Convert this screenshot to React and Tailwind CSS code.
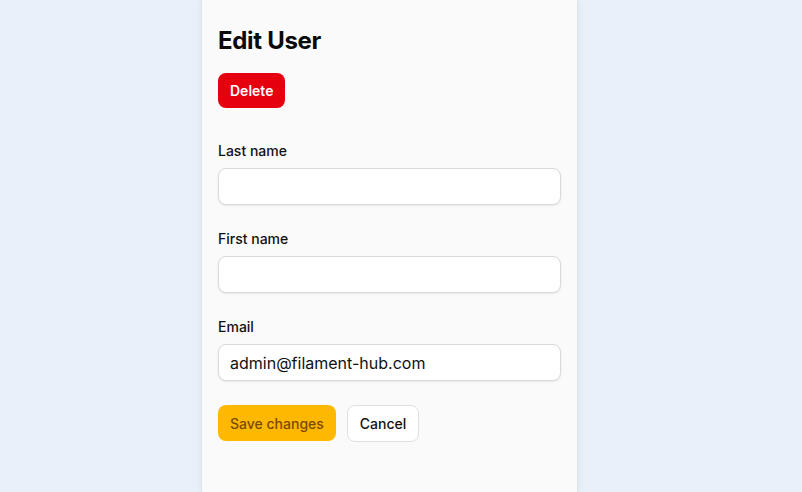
export default function App() {
  const field = (label, value) => (
    <div className="flex flex-col">
      <label className="mt-[1px] text-[14px] leading-5 font-medium text-[#111]">{label}</label>
      <div className="mt-[7px] h-[37px] w-full rounded-[8px] border border-[#d9d9d9] bg-white shadow-[0_1px_2px_rgba(0,0,0,0.08)] flex items-center pl-[11px] pr-3 text-[16px] text-[#111]">
        {value}
      </div>
    </div>
  );
  return (
    <div className="w-[802px] h-[492px] bg-[#e8f0f9] flex overflow-hidden" style={{ fontFamily: "Inter, 'Noto Sans', sans-serif" }}>
      <div className="ml-[201px] w-[377px] h-full bg-[#fafafa] border-x border-[#e0e3e8] shadow-[0_0_8px_rgba(0,0,0,0.06)] px-4 pt-[27px] flex flex-col">
        <h1 className="text-[24px] leading-[28px] font-bold text-[#0a0a0a] tracking-[-0.3px]">Edit User</h1>
        <div className="mt-[18px]">
          <button className="h-[35px] px-3 rounded-[8px] bg-[#e6000f] text-white text-[14px] font-semibold">Delete</button>
        </div>
        <div className="mt-[32px] flex flex-col gap-[23px]">
          {field("Last name", "")}
          {field("First name", "")}
          {field("Email", "admin@filament-hub.com")}
        </div>
        <div className="mt-[24px] flex gap-[11px]">
          <button className="h-[36px] px-3 rounded-[8px] bg-[#ffb800] text-[#7a4a00] text-[14px] font-medium">Save changes</button>
          <button className="h-[37px] px-3 rounded-[8px] bg-white border border-[#e0e0e0] text-[#111] text-[14px] font-medium">Cancel</button>
        </div>
      </div>
    </div>
  );
}
